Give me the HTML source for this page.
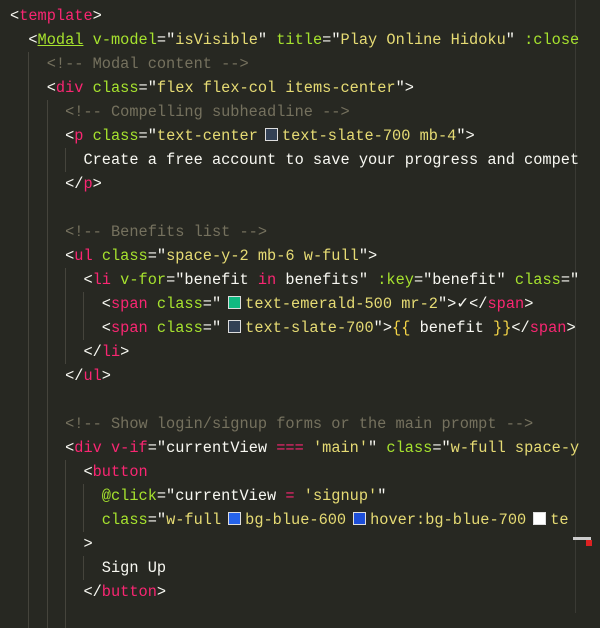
<!DOCTYPE html>
<html><head><meta charset="utf-8"><style>
html,body{margin:0;padding:0;background:#272822;width:600px;height:613px;overflow:hidden}
.c{position:absolute;top:4px;left:10px;font-family:"Liberation Mono",monospace;font-size:15.3px;color:#f8f8f2}
.l{height:24px;line-height:24px;position:relative;white-space:pre}
.g{display:inline-block;width:18.36px;height:24px;vertical-align:top;border-left:1px solid #45443c;box-sizing:border-box}
.s{display:inline-block;width:18.36px}
.t{color:#f92672}.a{color:#a6e22e}.y{color:#e6db74}.m{color:#75715e}.b{color:#f5d547}
.sw{display:inline-block;width:11px;height:11px;border:1px solid #ddd;margin:0 4px 0 7px;vertical-align:-1px}
.ruler{position:absolute;left:575px;top:0;width:1px;height:613px;background:#3a3a34}
</style></head><body>
<div class="ruler"></div>
<div style="position:absolute;left:573px;top:537px;width:18px;height:3px;background:#ccc"></div>
<div style="position:absolute;left:586px;top:540px;width:6px;height:6px;background:#d22"></div>
<div class="c"><div class="l">&lt;<span class="t">template</span>&gt;</div><div class="l"><span class="s"></span>&lt;<span class="a" style="text-decoration:underline">Modal</span> <span class="a">v-model</span>="<span class="y">isVisible</span>" <span class="a">title</span>="<span class="y">Play Online Hidoku</span>" <span class="a">:close</span></div><div class="l"><span class="s"></span><span class="g"></span><span class="m">&lt;!-- Modal content --&gt;</span></div><div class="l"><span class="s"></span><span class="g"></span>&lt;<span class="t">div</span> <span class="a">class</span>="<span class="y">flex flex-col items-center</span>"&gt;</div><div class="l"><span class="s"></span><span class="g"></span><span class="g"></span><span class="m">&lt;!-- Compelling subheadline --&gt;</span></div><div class="l"><span class="s"></span><span class="g"></span><span class="g"></span>&lt;<span class="t">p</span> <span class="a">class</span>="<span class="y">text-center<span class="sw" style="background:#334155"></span>text-slate-700 mb-4</span>"&gt;</div><div class="l"><span class="s"></span><span class="g"></span><span class="g"></span><span class="g"></span>Create a free account to save your progress and compet</div><div class="l"><span class="s"></span><span class="g"></span><span class="g"></span>&lt;/<span class="t">p</span>&gt;</div><div class="l"><span class="s"></span><span class="g"></span><span class="g"></span></div><div class="l"><span class="s"></span><span class="g"></span><span class="g"></span><span class="m">&lt;!-- Benefits list --&gt;</span></div><div class="l"><span class="s"></span><span class="g"></span><span class="g"></span>&lt;<span class="t">ul</span> <span class="a">class</span>="<span class="y">space-y-2 mb-6 w-full</span>"&gt;</div><div class="l"><span class="s"></span><span class="g"></span><span class="g"></span><span class="g"></span>&lt;<span class="t">li</span> <span class="a">v-for</span>="benefit <span class="t">in</span> benefits" <span class="a">:key</span>="benefit" <span class="a">class</span>="</div><div class="l"><span class="s"></span><span class="g"></span><span class="g"></span><span class="g"></span><span class="g"></span>&lt;<span class="t">span</span> <span class="a">class</span>="<span class="y"><span class="sw" style="background:#10b981"></span>text-emerald-500 mr-2</span>"&gt;✓&lt;/<span class="t">span</span>&gt;</div><div class="l"><span class="s"></span><span class="g"></span><span class="g"></span><span class="g"></span><span class="g"></span>&lt;<span class="t">span</span> <span class="a">class</span>="<span class="y"><span class="sw" style="background:#334155"></span>text-slate-700</span>"&gt;<span class="b">{{</span> benefit <span class="b">}}</span>&lt;/<span class="t">span</span>&gt;</div><div class="l"><span class="s"></span><span class="g"></span><span class="g"></span><span class="g"></span>&lt;/<span class="t">li</span>&gt;</div><div class="l"><span class="s"></span><span class="g"></span><span class="g"></span>&lt;/<span class="t">ul</span>&gt;</div><div class="l"><span class="s"></span><span class="g"></span><span class="g"></span></div><div class="l"><span class="s"></span><span class="g"></span><span class="g"></span><span class="m">&lt;!-- Show login/signup forms or the main prompt --&gt;</span></div><div class="l"><span class="s"></span><span class="g"></span><span class="g"></span>&lt;<span class="t">div</span> <span class="t">v-if</span>="currentView <span class="t">===</span> <span class="y">'main'</span>" <span class="a">class</span>="<span class="y">w-full space-y</span></div><div class="l"><span class="s"></span><span class="g"></span><span class="g"></span><span class="g"></span>&lt;<span class="t">button</span></div><div class="l"><span class="s"></span><span class="g"></span><span class="g"></span><span class="g"></span><span class="g"></span><span class="a">@click</span>="currentView <span class="t">=</span> <span class="y">'signup'</span>"</div><div class="l"><span class="s"></span><span class="g"></span><span class="g"></span><span class="g"></span><span class="g"></span><span class="a">class</span>="<span class="y">w-full<span class="sw" style="background:#2563eb"></span>bg-blue-600<span class="sw" style="background:#1d4ed8"></span>hover:bg-blue-700<span class="sw" style="background:#fff"></span>te</span></div><div class="l"><span class="s"></span><span class="g"></span><span class="g"></span><span class="g"></span>&gt;</div><div class="l"><span class="s"></span><span class="g"></span><span class="g"></span><span class="g"></span><span class="g"></span>Sign Up</div><div class="l"><span class="s"></span><span class="g"></span><span class="g"></span><span class="g"></span>&lt;/<span class="t">button</span>&gt;</div><div class="l"><span class="s"></span><span class="g"></span><span class="g"></span><span class="g"></span></div></div>
</body></html>
